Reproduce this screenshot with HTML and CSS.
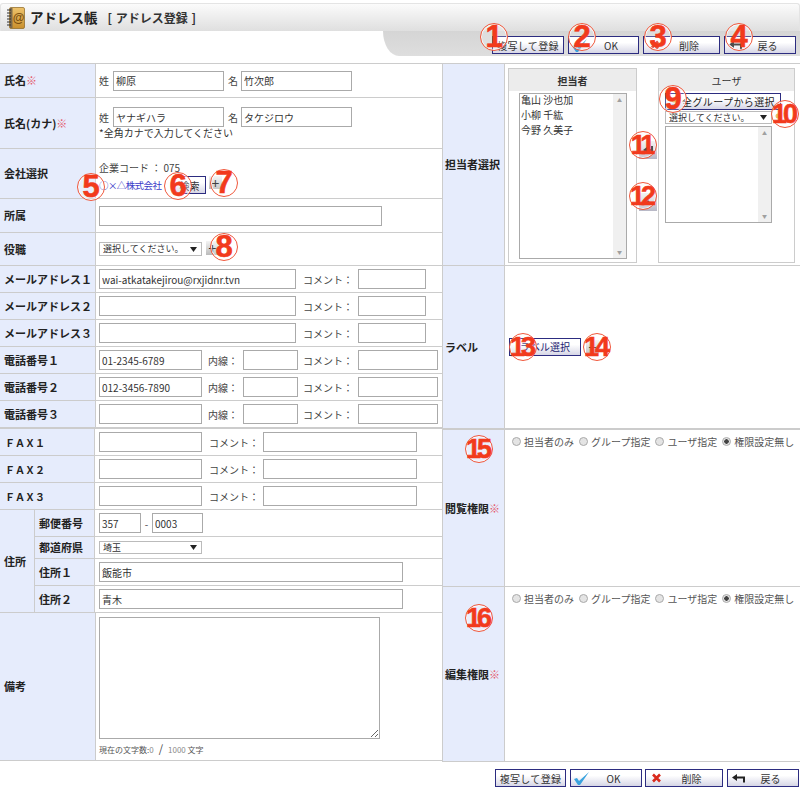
FILE: index.html
```html
<!DOCTYPE html>
<html lang="ja">
<head>
<meta charset="utf-8">
<title>アドレス帳</title>
<link rel="stylesheet" href="styles.css">
</head>
<body>
<header class="title-bar">
  <svg class="book" viewBox="0 0 18 22" width="18" height="22">
    <defs><linearGradient id="cover" x1="0" y1="0" x2="0" y2="1"><stop offset="0" stop-color="#eec36c"/><stop offset="1" stop-color="#c98f2c"/></linearGradient></defs>
    <rect x="2.5" y=".5" width="15" height="21" rx="1.5" fill="url(#cover)" stroke="#8a6420" stroke-width=".7"/>
    <rect x="3" y="1" width="2.5" height="20" fill="#7d6a4c"/>
    <path d="M0 3h4M0 6h4M0 9h4M0 12h4M0 15h4M0 18h4" stroke="#333" stroke-width="1.2"/>
    <text class="book-at" x="11.5" y="15" text-anchor="middle">@</text>
  </svg>
  <h1>アドレス帳</h1>
  <span class="subtitle">[ アドレス登録 ]</span>
</header>

<div class="toolbar">
  <button class="btn btn-copy" type="button">複写して登録</button>
  <button class="btn btn-ok" type="button"><svg class="ico" viewBox="0 0 16 14"><path d="M0 8l3-1 2 3 10-9-9 13h-2z" fill="#3aa3de"/></svg><span>OK</span></button>
  <button class="btn btn-del" type="button"><svg class="ico" viewBox="0 0 16 14"><path d="M4 3.500l7 7M11 3.500l-7 7" stroke="#d92a1c" stroke-width="2.600"/></svg><span>削除</span></button>
  <button class="btn btn-back" type="button"><svg class="ico" viewBox="0 0 16 14"><path d="M1 6.500l5-3.500v2.500h8v6h-2v-4H6v2.500z" fill="#222"/></svg><span>戻る</span></button>
</div>

<main class="sheet">
  <section class="col-left">
    <div class="row h34"><div class="lbl">氏名<i>※</i></div><div class="val">姓<input class="w111 gap-s" value="柳原"><span class="gap-l">名</span><input class="w111 gap-t" value="竹次郎"></div></div>
    <div class="row h51"><div class="lbl">氏名(カナ)<i>※</i></div><div class="val stack kana"><div class="line">姓<input class="w111 gap-s" value="ヤナギハラ"><span class="gap-l">名</span><input class="w111 gap-t" value="タケジロウ"></div><div class="note">*全角カナで入力してください</div></div></div>
    <div class="row h50"><div class="lbl">会社選択</div><div class="val stack company-cell"><div class="code">企業コード ： 075</div><div class="line"><a class="company">○×△株式会社</a><button class="mini search" type="button">検索</button><button class="plus" type="button">+</button></div></div></div>
    <div class="row h34"><div class="lbl">所属</div><div class="val"><input class="w283"></div></div>
    <div class="row h33"><div class="lbl">役職</div><div class="val"><select class="sel w103"><option>選択してください。</option></select><button class="plus after-sel" type="button">+</button></div></div>
    <div class="row h27"><div class="lbl">メールアドレス１</div><div class="val"><input class="w197" value="wai-atkatakejirou@rxjidnr.tvn"><span class="cap-m">コメント：</span><input class="w68"></div></div>
    <div class="row h27"><div class="lbl">メールアドレス２</div><div class="val"><input class="w197"><span class="cap-m">コメント：</span><input class="w68"></div></div>
    <div class="row h27"><div class="lbl">メールアドレス３</div><div class="val"><input class="w197"><span class="cap-m">コメント：</span><input class="w68"></div></div>
    <div class="row h27"><div class="lbl">電話番号１</div><div class="val"><input class="w103" value="01-2345-6789"><span class="cap-t">内線：</span><input class="w55"><span class="cap-c">コメント：</span><input class="w80"></div></div>
    <div class="row h27"><div class="lbl">電話番号２</div><div class="val"><input class="w103" value="012-3456-7890"><span class="cap-t">内線：</span><input class="w55"><span class="cap-c">コメント：</span><input class="w80"></div></div>
    <div class="row h28 thick"><div class="lbl">電話番号３</div><div class="val"><input class="w103"><span class="cap-t">内線：</span><input class="w55"><span class="cap-c">コメント：</span><input class="w80"></div></div>

    <div class="row h27 fax"><div class="lbl">ＦＡＸ１</div><div class="val"><input class="w103"><span class="cap-f">コメント：</span><input class="w154"></div></div>
    <div class="row h27 fax"><div class="lbl">ＦＡＸ２</div><div class="val"><input class="w103"><span class="cap-f">コメント：</span><input class="w154"></div></div>
    <div class="row h27 fax"><div class="lbl">ＦＡＸ３</div><div class="val"><input class="w103"><span class="cap-f">コメント：</span><input class="w154"></div></div>

    <div class="addr">
      <div class="lbl addr-head">住所</div>
      <div class="addr-rows">
        <div class="row h27"><div class="lbl sub">郵便番号</div><div class="val"><input class="w42" value="357"><span class="dash">-</span><input class="w51" value="0003"></div></div>
        <div class="row h22"><div class="lbl sub">都道府県</div><div class="val"><select class="sel w103"><option>埼玉</option></select></div></div>
        <div class="row h27"><div class="lbl sub">住所１</div><div class="val"><input class="w304" value="飯能市"></div></div>
        <div class="row h27"><div class="lbl sub">住所２</div><div class="val"><input class="w304" value="青木"></div></div>
      </div>
    </div>

    <div class="row h148 last"><div class="lbl">備考</div><div class="val stack memo"><textarea class="memo-box"></textarea><div class="count">現在の文字数:<b>0</b><em>/</em><b>1000</b> 文字</div></div></div>
  </section>

  <section class="col-right">
    <div class="rrow h202">
      <div class="lbl">担当者選択</div>
      <div class="rval pickers">
        <div class="panel panel-a">
          <div class="panel-head">担当者</div>
          <div class="panel-body">
            <div class="listbox lb-a"><ul><li>亀山 沙也加</li><li>小柳 千紘</li><li>今野 久美子</li></ul><div class="sb"><b>▲</b><b>▼</b></div></div>
          </div>
        </div>
        <div class="moves">
          <button class="mv" type="button"><svg viewBox="0 0 10 8" width="10" height="8"><path d="M0 4l4-3v2h4v2H4v2zM8 0h2v8H8z" fill="#222"/></svg></button>
          <button class="mv" type="button"><svg viewBox="0 0 10 8" width="10" height="8"><path d="M1 7l4-5 4 5z" fill="#222"/></svg></button>
        </div>
        <div class="panel panel-b">
          <div class="panel-head">ユーザ</div>
          <div class="panel-body stack-b">
            <button class="mini group" type="button"><svg class="person" viewBox="0 0 10 10"><circle cx="5" cy="3" r="2.500" fill="#e8b040"/><path d="M1 10c0-4 8-4 8 0z" fill="#9aa6c8"/></svg>全グループから選択</button>
            <div class="line"><select class="sel w107"><option>選択してください。</option></select><svg class="person after-user" viewBox="0 0 10 10"><circle cx="5" cy="3" r="2.500" fill="#e8b040"/><path d="M1 10c0-4 8-4 8 0z" fill="#9aa6c8"/></svg></div>
            <div class="listbox lb-b"><ul></ul><div class="sb"><b>▲</b><b>▼</b></div></div>
          </div>
        </div>
      </div>
    </div>
    <div class="rrow h164 thick">
      <div class="lbl">ラベル</div>
      <div class="rval mid"><button class="mini label-btn" type="button">ラベル選択</button><button class="plus after-label" type="button">+</button></div>
    </div>
    <div class="rrow h157">
      <div class="lbl">閲覧権限<i>※</i></div>
      <div class="rval radios">
        <label><input type="radio" name="view">担当者のみ</label>
        <label><input type="radio" name="view">グループ指定</label>
        <label><input type="radio" name="view">ユーザ指定</label>
        <label><input type="radio" name="view" checked>権限設定無し</label>
      </div>
    </div>
    <div class="rrow h175 last">
      <div class="lbl">編集権限<i>※</i></div>
      <div class="rval radios">
        <label><input type="radio" name="edit">担当者のみ</label>
        <label><input type="radio" name="edit">グループ指定</label>
        <label><input type="radio" name="edit">ユーザ指定</label>
        <label><input type="radio" name="edit" checked>権限設定無し</label>
      </div>
    </div>
  </section>
</main>

<footer class="footer">
  <button class="btn btn-copy" type="button">複写して登録</button>
  <button class="btn btn-ok" type="button"><svg class="ico" viewBox="0 0 16 14"><path d="M0 8l3-1 2 3 10-9-9 13h-2z" fill="#3aa3de"/></svg><span>OK</span></button>
  <button class="btn btn-del" type="button"><svg class="ico" viewBox="0 0 16 14"><path d="M4 3.500l7 7M11 3.500l-7 7" stroke="#d92a1c" stroke-width="2.600"/></svg><span>削除</span></button>
  <button class="btn btn-back" type="button"><svg class="ico" viewBox="0 0 16 14"><path d="M1 6.500l5-3.500v2.500h8v6h-2v-4H6v2.500z" fill="#222"/></svg><span>戻る</span></button>
</footer>

<div class="mark m1">1</div><div class="mark m2">2</div><div class="mark m3">3</div><div class="mark m4">4</div>
<div class="mark m5">5</div><div class="mark m6">6</div><div class="mark m7">7</div><div class="mark m8">8</div>
<div class="mark m9">9</div><div class="mark two m10">10</div><div class="mark two m11">11</div><div class="mark two m12">12</div>
<div class="mark two m13">13</div><div class="mark two m14">14</div><div class="mark two m15">15</div><div class="mark two m16">16</div>
</body>
</html>
```
FILE: styles.css
```css
* { box-sizing: border-box; }
html, body { margin: 0; padding: 0; }
body {
  position: relative;
  width: 800px;
  height: 788px;
  overflow: hidden;
  background: #fff;
  color: #444;
  font: 10px/1.3 "Noto Sans CJK JP", "Liberation Sans", sans-serif;
}
input, select, textarea, button { font: inherit; color: #333; margin: 0; }

/* header */
.title-bar {
  margin-top: 3px;
  height: 28px;
  display: flex;
  align-items: center;
  padding-left: 6px;
  border: 1px solid #e4e4e4;
  border-bottom: 0;
  border-radius: 3px 3px 0 0;
  background: linear-gradient(#fbfbfb, #dfdfdf);
}
.book { margin-right: 5px; }
.book-at { font: bold 12px "Liberation Sans", sans-serif; fill: #7a4f10; }
.title-bar h1 { margin: 0 10px 0 0; font-size: 13.500px; font-weight: bold; color: #222; }
.subtitle { font-size: 12px; font-weight: bold; color: #333; word-spacing: 1px; }
.toolbar {
  margin-left: 383px;
  height: 25px;
  display: flex;
  align-items: flex-start;
  padding: 5px 0 0 109px;
  gap: 4px;
  background: linear-gradient(#d5d5d5, #dedede);
  border-bottom-left-radius: 16px 25px;
}
.btn {
  display: flex;
  align-items: center;
  height: 18px;
  padding: 0 0 0 3px;
  border: 1px solid #2c2c80;
  background: linear-gradient(#fff 35%, #d6d6e6);
  font-size: 10px;
  color: #333;
}
.btn span { flex: 1; text-align: center; padding-right: 4px; }
.ico { width: 16px; height: 14px; flex: none; }
.btn-copy { width: 72px; justify-content: center; padding: 0; letter-spacing: .3px; }
.btn-ok { width: 71px; }
.btn-del { width: 77px; }
.btn-back { width: 72px; }

/* sheet */
.sheet {
  margin-top: 7px;
  display: grid;
  grid-template-columns: 443px 357px;
  border-top: 1px solid #ccc;
}
.row { display: flex; border-bottom: 1px solid #ccc; }
.thick { border-bottom-width: 2px !important; }
.h22 { height: 22px; } .h27 { height: 27px; } .h28 { height: 28px; } .h33 { height: 33px; }
.h34 { height: 34px; } .h50 { height: 50px; } .h51 { height: 51px; } .h148 { height: 148px; }
.h157 { height: 157px; } .h164 { height: 164px; } .h175 { height: 175px; } .h202 { height: 202px; }
.lbl {
  flex: none;
  width: 96px;
  display: flex;
  align-items: center;
  padding-left: 4px;
  background: #e6ecfc;
  border-right: 1px solid #ccc;
  font-size: 11px;
  font-weight: bold;
  color: #222;
  white-space: nowrap;
}
.lbl i { font-style: normal; font-weight: normal; color: #e4566a; }
.val {
  flex: 1;
  display: flex;
  align-items: center;
  padding-left: 3px;
  white-space: nowrap;
  min-width: 0;
}
.col-left { border-right: 1px solid #ccc; }
.fax .lbl { width: 95px; padding-left: 5px; font-size: 10px; }
.fax .val, .addr .val { padding-left: 4px; }

input:not([type]) {
  height: 20px;
  padding: 0 2px;
  border: 1px solid #aaa;
  background: #fff;
  font-size: 10px;
}
.w42 { width: 42px; } .w51 { width: 51px; } .w55 { width: 55px; } .w68 { width: 68px; }
.w80 { width: 80px; } .w103 { width: 103px; } .w107 { width: 107px; } .w111 { width: 111px; }
.w154 { width: 154px; } .w197 { width: 197px; } .w283 { width: 283px; } .w304 { width: 304px; }
.gap-s { margin-left: 4px; }
.gap-t { margin-left: 3px; }
.gap-l { margin-left: 4px; }
.stack { flex-direction: column; align-items: flex-start; justify-content: flex-start; }
.kana { padding-top: 9px; }
.company-cell { padding-top: 12px; }
.line { display: flex; align-items: center; }
.note { margin-top: -1px; color: #333; }
.code { height: 13px; margin-bottom: 2px; font-size: 10px; }
.company { width: 74px; color: #3a3ac8; font-size: 9.500px; letter-spacing: -.6px; }
.cap-m { margin: 0 5px 0 7px; width: 50px; }
.cap-t { margin: 0 5px 0 6px; width: 30px; }
.cap-c { margin: 0 5px 0 5px; width: 50px; }
.cap-f { margin: 0 4px 0 7px; width: 50px; }
.dash { width: 11px; text-align: center; }

.sel {
  appearance: none;
  height: 14px;
  padding: 0 0 0 3px;
  border: 1px solid #bbb;
  background: #fff url("data:image/svg+xml,%3Csvg xmlns='http://www.w3.org/2000/svg' width='7' height='5'%3E%3Cpath d='M0 0h7L3.5 5z' fill='%23222'/%3E%3C/svg%3E") no-repeat right 4px center;
  background-size: 7px 5px;
  font-size: 9px;
  line-height: 12px;
}
.addr .sel { height: 13px; }
.mini {
  height: 18px;
  padding: 0;
  border: 1px solid #2c2c80;
  background: linear-gradient(#fff 35%, #d6d6e6);
  font-size: 10px;
}
.search { width: 33px; }
.plus {
  width: 13px;
  height: 13px;
  padding: 0;
  border: 0;
  background: linear-gradient(#f4f4f4, #bbb);
  font-size: 14px;
  line-height: 12px;
  color: #111;
}
.line .plus { margin-left: 3px; margin-top: -5px; }
.after-sel { margin-left: 4px; margin-top: -3px; height: 14px; }
.memo { padding-top: 4px; }
.memo-box { width: 281px; height: 122px; border: 1px solid #aaa; background: #fff; resize: both; display: block; }
.count { margin-top: 2px; font-size: 8px; color: #555; }
.count b { font-weight: normal; color: #8a8a8a; }
.count em { font-style: normal; font-size: 11px; margin: 0 5px; color: #444; }

.addr { display: flex; }
.addr-head { width: 35px; padding-left: 4px; border-bottom: 1px solid #ccc; }
.addr-rows { flex: 1; }
.addr .sub { width: 60px; padding-left: 4px; }

/* right */
.rrow { display: flex; border-bottom: 1px solid #ccc; }
.rrow .lbl { width: 62px; padding-left: 2px; }
.rval { flex: 1; min-width: 0; }
.pickers { display: flex; padding: 4px 0 2px 3px; align-items: stretch; }
.panel { border: 1px solid #ccc; display: flex; flex-direction: column; }
.panel-a { width: 129px; }
.panel-b { width: 137px; }
.panel-head {
  flex: none;
  height: 22px;
  display: flex;
  align-items: center;
  justify-content: center;
  background: #ececec;
  font-size: 10px;
  font-weight: bold;
  color: #333;
}
.panel-b .panel-head { font-weight: normal; }
.panel-body { flex: 1; padding: 2px 9px 3px 10px; display: flex; }
.stack-b { flex-direction: column; align-items: flex-start; padding: 2px 0 0 6px; }
.listbox { display: flex; border: 1px solid #aaa; background: #fff; }
.lb-a { width: 108px; height: 166px; }
.lb-b { width: 107px; height: 97px; margin-top: 2px; }
.listbox ul { flex: 1; margin: 0; padding: 0 0 0 1px; list-style: none; font-size: 10px; color: #333; }
.listbox li { height: 15px; line-height: 12px; }
.sb {
  flex: none;
  width: 13px;
  display: flex;
  flex-direction: column;
  justify-content: space-between;
  align-items: center;
  background: #f0f0f0;
}
.sb b { font-size: 5px; line-height: 12px; font-weight: normal; color: #a0a0a0; }
.moves { width: 21px; display: flex; flex-direction: column; align-items: center; padding-top: 73px; gap: 34px; }
.mv {
  width: 18px;
  height: 18px;
  padding: 0;
  border: 0;
  display: flex;
  align-items: center;
  justify-content: center;
  background: linear-gradient(#f0f0f0, #b8b8c6);
}
.group {
  width: 116px;
  height: 17px;
  display: flex;
  align-items: center;
  padding-left: 3px;
  gap: 3px;
  letter-spacing: .4px;
  color: #222;
}
.person { width: 10px; height: 10px; flex: none; }
.stack-b .sel { height: 13px; }
.stack-b .line { margin-top: 1px; }
.after-user { margin-left: 1px; }
.mid { display: flex; align-items: center; padding: 0 0 0 4px; }
.label-btn { width: 72px; height: 18px; color: #1c1c70; margin-top: -1px; }
.after-label { margin-left: 5px; margin-top: -1px; }
.radios { display: flex; padding: 4px 0 0 7px; gap: 5px; white-space: nowrap; }
.radios label { display: flex; align-items: center; height: 14px; color: #555; }
.radios input {
  appearance: none;
  width: 9px;
  height: 9px;
  margin: 0 3px 0 0;
  border: 1px solid #aaa;
  border-radius: 50%;
  background: #e4e4e4;
}
.radios input:checked { background: radial-gradient(circle, #444 0 2px, #e4e4e4 2.5px); }

.footer {
  display: flex;
  justify-content: flex-end;
  gap: 4px;
  padding: 7px 1px 0 0;
}
.footer .btn-copy { width: 71px; }
.footer .btn-ok { width: 72px; margin-right: -1px; }
.footer .btn-del { width: 78px; }

/* callout marks over the screenshot */
.mark {
  position: absolute;
  width: 28px;
  height: 28px;
  border: 1px solid #f0583c;
  border-radius: 50%;
  background: rgba(255,255,255,.2);
  box-shadow: inset 0 0 0 1px rgba(255,255,255,.8);
  display: flex;
  align-items: center;
  justify-content: center;
  font: bold 31px/26px "Liberation Sans", sans-serif;
  color: #f23a1c;
  -webkit-text-stroke: .6px #f23a1c;
}
.mark.two { font-size: 27px; letter-spacing: -4px; padding-right: 4px; }
.m1 { left: 480px; top: 23px; } .m2 { left: 568px; top: 23px; } .m3 { left: 644px; top: 23px; } .m4 { left: 725px; top: 23px; }
.m5 { left: 77px; top: 173px; } .m6 { left: 164px; top: 172px; } .m7 { left: 210px; top: 169px; } .m8 { left: 210px; top: 233px; }
.m9 { left: 659px; top: 85px; } .m10 { left: 771px; top: 100px; } .m11 { left: 629px; top: 131px; } .m12 { left: 629px; top: 182px; }
.m13 { left: 509px; top: 333px; } .m14 { left: 583px; top: 333px; } .m15 { left: 465px; top: 435px; } .m16 { left: 465px; top: 604px; }
```
